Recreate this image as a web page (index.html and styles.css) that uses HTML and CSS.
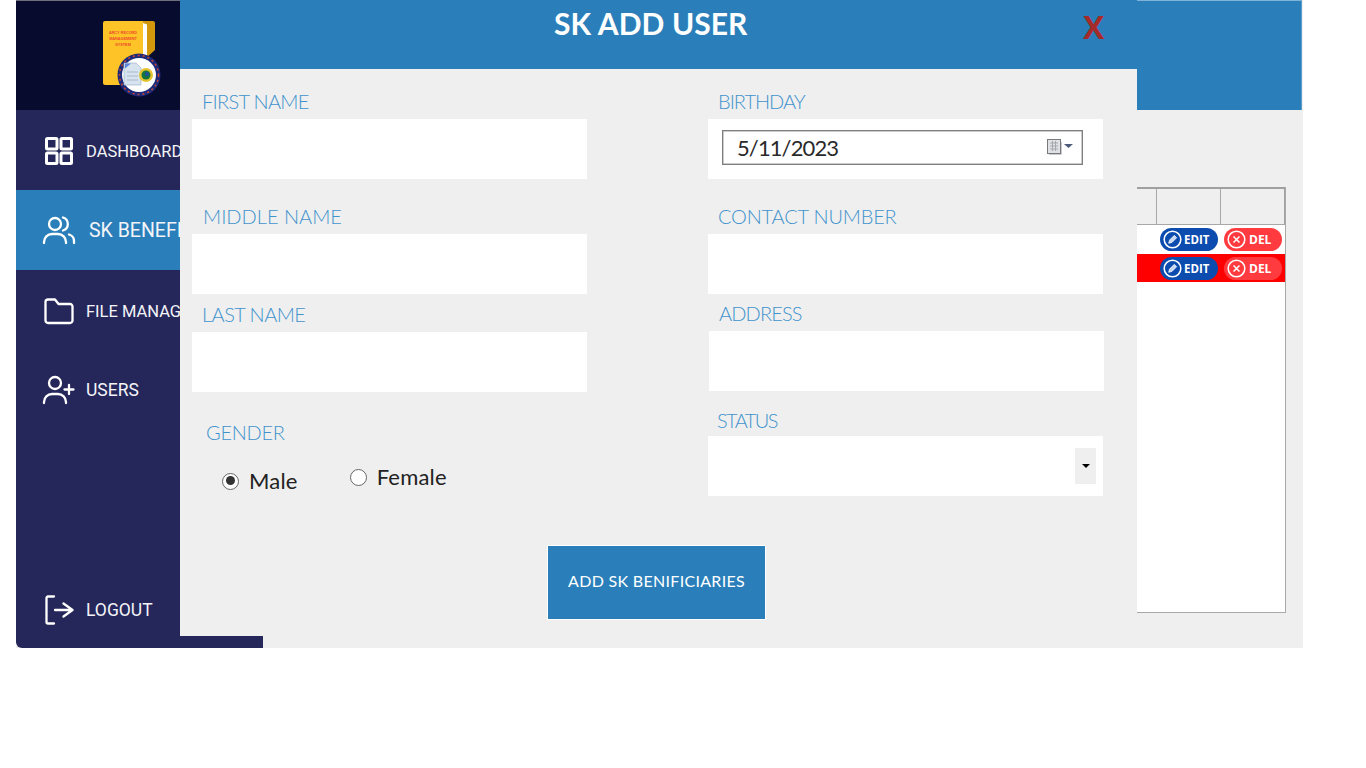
FILE: index.html
```html
<!DOCTYPE html>
<html lang="en">
<head>
<meta charset="utf-8">
<title>SK Add User</title>
<link rel="stylesheet" href="styles.css">
</head>
<body>
<div class="app">
  <aside class="sidebar">
    <div class="logo">
      <svg class="logo-art" width="64" height="80" viewBox="0 0 64 80">
        <path d="M8 3h44a2 2 0 0 1 2 2v27l-10 9H8z" fill="#d4980c"/>
        <path d="M2 5a2 2 0 0 1 2-2h38v64H4a2 2 0 0 1-2-2z" fill="#fdc327"/>
        <path d="M42 5l4 1.500v31l-4 4z" fill="#fff"/>
        <text class="logo-text" x="22" y="15.500">ARCY RECORD</text>
        <text class="logo-text" x="22" y="21.500">MANAGEMENT</text>
        <text class="logo-text" x="22" y="27.500">SYSTEM</text>
        <circle cx="38" cy="57" r="21.500" fill="#1d2a7a"/>
        <circle cx="38" cy="57" r="19.500" fill="none" stroke="#c9452f" stroke-width="1.500" stroke-dasharray="2 3"/>
        <circle cx="38" cy="57" r="17" fill="#fff"/>
        <path d="M23 45h12l5 5v17H23z" fill="#d7e3ee" stroke="#9fb2c6" stroke-width=".7"/>
        <path d="M26 54h11M26 58h11M26 62h11" stroke="#a9bacb" stroke-width="1"/>
        <path d="M24 45.500l6 0-6 5z" fill="#5c86d8"/>
        <circle cx="45" cy="57" r="7" fill="#e4c331"/>
        <circle cx="45" cy="57" r="4.500" fill="#14733f"/>
        <circle cx="46" cy="56" r="2" fill="#1f4fa0"/>
      </svg>
    </div>
    <nav class="nav">
      <a class="nav-item nav-low nav-text-small">
        <svg class="nav-icon nav-icon-grid" viewBox="0 0 30 30"><rect x="2.500" y="2.500" width="10.500" height="10.500" rx="1"/><rect x="17" y="2.500" width="10.500" height="10.500" rx="1"/><rect x="2.500" y="17" width="10.500" height="10.500" rx="1"/><rect x="17" y="17" width="10.500" height="10.500" rx="1"/></svg>
        <span class="nav-label">DASHBOARD</span>
      </a>
      <a class="nav-item nav-active">
        <svg class="nav-icon nav-icon-wide" viewBox="0 0 34 30"><circle cx="13" cy="9" r="6"/><path d="M2 28v-1a8 8 0 0 1 8-8h6a8 8 0 0 1 8 8v1"/><path d="M21 2.500a6.800 6.800 0 0 1 0 13"/><path d="M27 19.500a7 7 0 0 1 5 7v1.500"/></svg>
        <span class="nav-label nav-label-active">SK BENEFICIARIES</span>
      </a>
      <a class="nav-item nav-low nav-text-small">
        <svg class="nav-icon" viewBox="0 0 30 30"><path d="M1.500 6a2.500 2.500 0 0 1 2.500-2.500h7l3.500 4.500h11.500a2.500 2.500 0 0 1 2.500 2.500v14a2.500 2.500 0 0 1-2.500 2.500h-22a2.500 2.500 0 0 1-2.500-2.500z"/></svg>
        <span class="nav-label">FILE MANAGEMENT</span>
      </a>
      <a class="nav-item">
        <svg class="nav-icon nav-icon-plus" viewBox="0 0 34 30"><circle cx="13" cy="8" r="6"/><path d="M2 28v-1a8 8 0 0 1 8-8h6a8 8 0 0 1 8 8v1"/><path d="M27 10v9M22.500 14.500h9"/></svg>
        <span>USERS</span>
      </a>
      <a class="nav-item nav-logout nav-low">
        <svg class="nav-icon" viewBox="0 0 30 30"><path d="M10 1.500H4A1.500 1.500 0 0 0 2.500 3v24A1.500 1.500 0 0 0 4 28.500h6"/><path d="M11 15h17.500M19.500 8.500L28.500 15l-9 6.500"/></svg>
        <span>LOGOUT</span>
      </a>
    </nav>
  </aside>
  <main class="main">
    <div class="topbar"></div>
    <div class="content">
      <div class="table">
        <div class="row row-head">
          <div class="cell-fill"></div>
          <div class="cell cell-edit"></div>
          <div class="cell cell-del"></div>
        </div>
        <div class="row">
          <div class="cell-fill"></div>
          <div class="actions">
            <span class="pill pill-edit"><svg class="pill-icon" viewBox="0 0 16 16"><circle cx="8" cy="8" r="7"/><path class="pencil" d="M4.800 11.200l.7-2.700 4-4 2 2-4 4z"/></svg>EDIT</span>
            <span class="pill pill-del"><svg class="pill-icon" viewBox="0 0 16 16"><circle cx="8" cy="8" r="7"/><path d="M5.500 5.500l5 5M10.500 5.500l-5 5"/></svg>DEL</span>
          </div>
        </div>
        <div class="row row-red">
          <div class="cell-fill"></div>
          <div class="actions">
            <span class="pill pill-edit"><svg class="pill-icon" viewBox="0 0 16 16"><circle cx="8" cy="8" r="7"/><path class="pencil" d="M4.800 11.200l.7-2.700 4-4 2 2-4 4z"/></svg>EDIT</span>
            <span class="pill pill-del"><svg class="pill-icon" viewBox="0 0 16 16"><circle cx="8" cy="8" r="7"/><path d="M5.500 5.500l5 5M10.500 5.500l-5 5"/></svg>DEL</span>
          </div>
        </div>
      </div>
    </div>
  </main>
</div>

<section class="modal">
  <header class="modal-head">
    <h1 class="modal-title">SK ADD USER</h1>
    <span class="modal-close">X</span>
  </header>
  <form class="form">
    <div class="col col-left">
      <div class="field">
        <label class="label label-first">FIRST NAME</label>
        <div class="box"></div>
      </div>
      <div class="field field-middle">
        <label class="label label-middle">MIDDLE NAME</label>
        <div class="box"></div>
      </div>
      <div class="field field-last">
        <label class="label label-last">LAST NAME</label>
        <div class="box"></div>
      </div>
      <div class="field field-gender">
        <label class="label label-gender">GENDER</label>
        <div class="radios">
          <span class="radio radio-male"><i class="dot dot-on"></i>Male</span>
          <span class="radio radio-female"><i class="dot"></i>Female</span>
        </div>
      </div>
    </div>
    <div class="col col-right">
      <div class="field">
        <label class="label label-birthday">BIRTHDAY</label>
        <div class="box box-date">
          <div class="date">
            <span class="date-value">5/11/2023</span>
            <svg class="cal" width="28" height="18" viewBox="0 0 28 18">
              <path d="M3 16.500h12.500V4" fill="none" stroke="#c9cbce"/>
              <rect x="1.500" y="1.500" width="13" height="14" fill="#dfe1e4" stroke="#77797d"/>
              <path d="M4 5h8M4 8h8M4 11h8M6.500 3v10M9.500 3v10" stroke="#a5a8ad" stroke-width="1"/>
              <path d="M18 6h9l-4.500 4z" fill="#4d5a78"/>
            </svg>
          </div>
        </div>
      </div>
      <div class="field field-middle">
        <label class="label label-contact">CONTACT NUMBER</label>
        <div class="box"></div>
      </div>
      <div class="field field-address">
        <label class="label label-address">ADDRESS</label>
        <div class="box"></div>
      </div>
      <div class="field field-status">
        <label class="label label-status">STATUS</label>
        <div class="box box-select"><span class="select-btn"><i class="caret"></i></span></div>
      </div>
    </div>
    <button class="submit" type="button">ADD SK BENIFICIARIES</button>
  </form>
</section>
</body>
</html>
```
FILE: styles.css
```css
* { box-sizing: border-box; }
html, body { margin: 0; padding: 0; background: #fff; }
body { width: 1366px; height: 768px; overflow: hidden; position: relative; font-family: "Lato", "Liberation Sans", sans-serif; }

.app { display: flex; width: 1287px; height: 648px; margin-left: 16px; background: #efefef; }

.sidebar { width: 247px; flex: none; display: flex; flex-direction: column; background: #25275a; border-bottom-left-radius: 6px; overflow: hidden; }
.logo { height: 110px; flex: none; background: #070b2e; border-top: 1px solid #6d6e7c; padding: 17px 0 0 85px; }
.logo-art { display: block; }
.logo-text { font: bold 3.800px "Liberation Sans", sans-serif; fill: #ef4a2c; text-anchor: middle; }
.nav { flex: 1; display: flex; flex-direction: column; }
.nav-item { height: 80px; flex: none; display: flex; align-items: center; gap: 12px; padding-left: 28px; color: #f4f4f8; font: 17.500px "Roboto", "Liberation Sans", sans-serif; white-space: nowrap; }
.nav-text-small { font-size: 16.500px; }
.nav-low { padding-top: 2px; }
.nav-label { width: 94px; overflow: hidden; }
.nav-label-active { width: 91px; }
.nav-icon { width: 30px; height: 30px; flex: none; fill: none; stroke: #fff; stroke-width: 2.300; stroke-linecap: round; stroke-linejoin: round; }
.nav-icon-grid { stroke-width: 3; }
.nav-active { background: #2a7fba; font-size: 19.500px; padding-left: 26px; gap: 13px; }
.nav-icon-wide, .nav-icon-plus { width: 34px; }
.nav-icon-plus { margin-right: -2px; margin-left: -2px; }
.nav-logout { margin-top: auto; height: 79px; }

.main { flex: 1; min-width: 0; display: flex; flex-direction: column; }
.topbar { height: 110px; flex: none; margin-right: 1px; background: #2a7fba; border-top: 1px solid #7fb3d8; border-right: 1px solid #5d9ecb; }
.content { flex: 1; padding: 77px 17px 35px 7px; }
.table { height: 100%; background: #fff; border: 1px solid #a8a8a8; border-top-width: 0; display: flex; flex-direction: column; }
.row { height: 29px; display: flex; flex: none; background: #fff; }
.row-head { height: 38px; background: #efefef; border-top: 2px solid #a0a0a0; border-bottom: 1px solid #a8a8a8; border-right: 1px solid #a0a0a0; }
.row-red { height: 28px; background: #ff0000; }
.cell-fill { flex: 1; }
.cell { height: 100%; border-left: 1px solid #a8a8a8; }
.cell-edit { width: 64px; }
.cell-del { width: 64px; }
.actions { width: 124px; display: flex; align-items: center; gap: 6px; margin-right: 1px; }
.pill { width: 58px; height: 23px; border-radius: 12px; display: flex; align-items: center; gap: 2px; padding-left: 3px; color: #fff; font: bold 11.500px "Open Sans", sans-serif; }
.pill-edit { background: #0b4cae; }
.pill-del { background: #ff3b3f; gap: 3px; font-size: 12px; }
.pill-icon { width: 19px; height: 19px; flex: none; fill: none; stroke: #fff; stroke-width: 1.300; }
.pencil { fill: #c9d9f2; stroke-width: .6; }

.modal { position: absolute; left: 180px; top: 0; width: 957px; height: 636px; background: #efefef; }
.modal-head { height: 69px; background: #2a7fba; position: relative; }
.modal-title { margin: 0; padding: 5px 0 0 374px; color: #fff; font: bold 30px/36px "Lato", sans-serif; word-spacing: .5px; white-space: nowrap; }
.modal-close { position: absolute; left: 903px; top: 9px; color: #a52a2a; font: bold 32px/36px "Open Sans", sans-serif; }

.form { display: grid; grid-template-columns: 516px 1fr; padding: 26px 0 0 12px; position: relative; height: 567px; }
.col { display: flex; flex-direction: column; align-items: flex-start; }
.field { width: 395px; }
.label { display: block; height: 24px; padding-left: 10px; color: #3f93cd; font: 300 20px/12px "Lato", sans-serif; white-space: nowrap; }
.label-first { letter-spacing: -.7px; }
.label-middle { padding-left: 11px; }
.label-last { letter-spacing: -.55px; }
.label-gender { padding-left: 14px; letter-spacing: -.3px; }
.label-birthday { letter-spacing: -1px; }
.label-contact { letter-spacing: -.2px; }
.label-address { letter-spacing: -.85px; }
.label-status { padding-left: 9px; padding-top: 2px; letter-spacing: -1.600px; }
.box { height: 60px; background: #fff; }
.field-middle { margin-top: 31px; }
.field-last { margin-top: 14px; }
.field-address { margin-top: 13px; margin-left: 1px; }
.field-status { margin-top: 21px; }
.field-gender { margin-top: 34px; }

.box-date { padding: 11px 20px 0 14px; }
.date { height: 35px; border: 1px solid #7f7f7f; box-shadow: inset 0 0 0 .5px #9a9a9a; background: #fff; display: flex; align-items: center; justify-content: space-between; padding: 0 8px 0 14px; color: #2a2a2a; font: 22px "Lato", sans-serif; }
.date-value { letter-spacing: -.9px; }
.cal { display: block; margin-top: -1px; }

.box-select { position: relative; }
.select-btn { position: absolute; left: 367px; top: 12px; width: 21px; height: 36px; background: #efefef; display: flex; align-items: center; justify-content: center; }
.caret { width: 0; height: 0; border-left: 4px solid transparent; border-right: 4px solid transparent; border-top: 4px solid #000; }

.radios { display: flex; align-items: flex-start; padding-left: 30px; margin-top: 15px; color: #222; font: 22px/24px "Lato", sans-serif; letter-spacing: .2px; }
.radio { display: flex; align-items: center; gap: 10px; }
.radio-male { margin-top: 4px; }
.radio-female { margin-left: 52px; }
.dot { width: 17px; height: 17px; border-radius: 50%; background: #fff; border: 1.500px solid #666; display: block; position: relative; flex: none; }
.dot-on::after { content: ""; position: absolute; left: 2.500px; top: 2.500px; width: 9px; height: 9px; border-radius: 50%; background: #333; }

.submit { position: absolute; left: 367px; top: 476px; width: 219px; height: 75px; background: #2a7fba; border: 1px solid #fff; color: #fff; font: 16px "Lato", sans-serif; letter-spacing: .3px; padding: 0 0 4px; }
```
